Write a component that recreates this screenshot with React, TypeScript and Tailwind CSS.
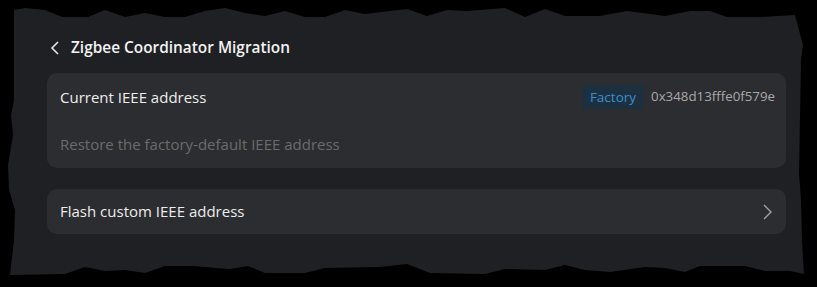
import React from 'react';

const tornEdge =
  '[clip-path:polygon(14px_10px,25px_8px,45px_10px,62px_17px,88px_17px,105px_10px,125px_17px,145px_13px,165px_17px,185px_17px,205px_11px,225px_8px,245px_13px,265px_16px,285px_11px,305px_17px,325px_17px,345px_10px,365px_14px,407px_9px,427px_16px,447px_10px,467px_11px,505px_8px,525px_17px,545px_9px,565px_16px,600px_16px,627px_11px,665px_16px,690px_11px,710px_11px,727px_17px,760px_17px,795px_15px,803px_45px,801px_60px,799px_173px,801px_200px,802px_240px,804px_274px,790px_271px,765px_271px,745px_266px,700px_266px,685px_272px,665px_268px,645px_267px,610px_272px,585px_270px,565px_265px,545px_270px,505px_269px,485px_274px,430px_273px,407px_264px,380px_267px,325px_268px,305px_273px,265px_273px,248px_266px,230px_269px,215px_268px,195px_266px,165px_266px,145px_273px,125px_270px,105px_271px,85px_267px,65px_274px,10px_275px,14px_240px,15px_210px,9px_190px,8px_165px,13px_135px,11px_115px,14px_100px)]';

export default function App() {
  return (
    <div className="w-[817px] h-[287px] bg-black font-['Open_Sans',sans-serif]">
      <div className={`w-full h-full bg-[#1f2023] pl-[47px] pr-[31px] pt-[36px] ${tornEdge}`}>
        {/* Header */}
        <div className="flex items-center h-[24px] gap-[11px] pl-[3px]">
          <svg width="10" height="14" viewBox="0 0 10 14" fill="none">
            <path d="M8 1 L2 7 L8 13" stroke="#e6e6e6" strokeWidth="1.6" strokeLinejoin="miter" />
          </svg>
          <h1 className="text-[15.4px] font-semibold text-[#f2f2f2]">Zigbee Coordinator Migration</h1>
        </div>

        {/* Current IEEE address */}
        <div className="mt-[13px] rounded-[10px] bg-[#2c2d30]">
          <div className="flex items-center justify-between h-[48px] pl-[13px] pr-[11px]">
            <span className="text-[15px] text-[#ececec]">Current IEEE address</span>
            <div className="flex items-center gap-[7px]">
              <span className="h-[24px] px-[8px] flex items-center rounded-[3px] bg-[#1c3040] text-[13.5px] text-[#3b8fce]">Factory</span>
              <span className="text-[13.3px] text-[#a8a8a8]">0x348d13fffe0f579e</span>
            </div>
          </div>
          <div className="flex items-center h-[47px] pl-[13px] pb-[1px]">
            <span className="text-[15px] text-[#6a6b6d]">Restore the factory-default IEEE address</span>
          </div>
        </div>

        {/* Flash custom IEEE address */}
        <div className="mt-[21px] flex items-center justify-between h-[45px] rounded-[10px] bg-[#2c2d30] pl-[13px] pr-[14px]">
          <span className="text-[15px] text-[#ececec]">Flash custom IEEE address</span>
          <svg width="10" height="16" viewBox="0 0 10 16" fill="none">
            <path d="M2 1 L9 8 L2 15" stroke="#a3a3a3" strokeWidth="1.4" />
          </svg>
        </div>
      </div>
    </div>
  );
}
